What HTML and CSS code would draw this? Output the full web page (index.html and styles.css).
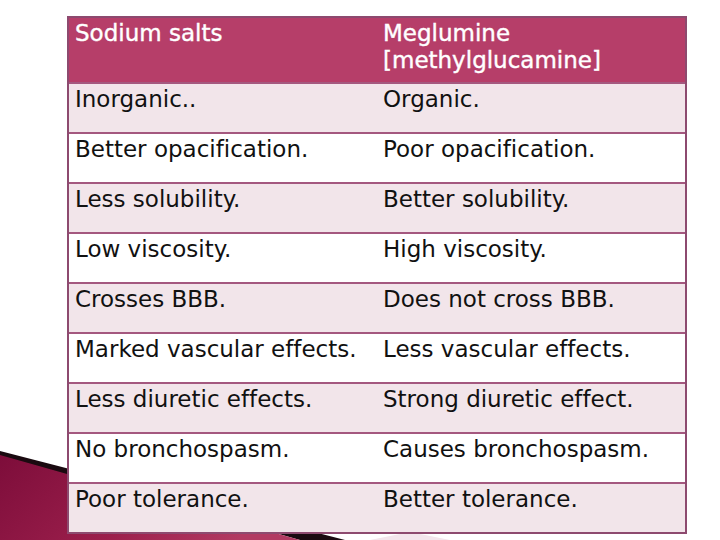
FILE: index.html
```html
<!DOCTYPE html>
<html lang="en">
<head>
<meta charset="utf-8">
<title>Sodium salts vs Meglumine</title>
<link rel="stylesheet" href="styles.css">
</head>
<body>
<div class="slide">
  <svg class="swoosh" width="720" height="120" viewBox="0 420 720 120" aria-hidden="true">
    <defs>
      <linearGradient id="cr" x1="0" y1="0" x2="1" y2="0.3">
        <stop offset="0" stop-color="#7d0d3a"/>
        <stop offset="0.6" stop-color="#9c1f4c"/>
        <stop offset="1" stop-color="#b23a62"/>
      </linearGradient>
    </defs>
    <polygon points="0,451 345,540 300,540 0,456" fill="#1a0a10"/>
    <polygon points="0,455 300,540 0,540" fill="url(#cr)"/>
    <polygon points="370,540 410,532 450,540" fill="#f3e6ec"/>
  </svg>
  <div class="grid">
    <div class="row head">
      <div class="cell">Sodium salts</div>
      <div class="cell">Meglumine<br>[methylglucamine]</div>
    </div>
    <div class="row pink">
      <div class="cell">Inorganic..</div>
      <div class="cell">Organic.</div>
    </div>
    <div class="row">
      <div class="cell">Better opacification.</div>
      <div class="cell">Poor opacification.</div>
    </div>
    <div class="row pink">
      <div class="cell">Less solubility.</div>
      <div class="cell">Better solubility.</div>
    </div>
    <div class="row">
      <div class="cell">Low viscosity.</div>
      <div class="cell">High viscosity.</div>
    </div>
    <div class="row pink">
      <div class="cell">Crosses BBB.</div>
      <div class="cell">Does not cross BBB.</div>
    </div>
    <div class="row">
      <div class="cell">Marked vascular effects.</div>
      <div class="cell">Less vascular effects.</div>
    </div>
    <div class="row pink">
      <div class="cell">Less diuretic effects.</div>
      <div class="cell">Strong diuretic effect.</div>
    </div>
    <div class="row">
      <div class="cell">No bronchospasm.</div>
      <div class="cell">Causes bronchospasm.</div>
    </div>
    <div class="row pink">
      <div class="cell">Poor tolerance.</div>
      <div class="cell">Better tolerance.</div>
    </div>
  </div>
</div>
</body>
</html>
```

FILE: styles.css
```css
html, body {
  margin: 0;
  padding: 0;
  background: #ffffff;
}

.slide {
  position: relative;
  width: 720px;
  height: 540px;
  overflow: hidden;
  padding-top: 16px;
  box-sizing: border-box;
  font-family: "DejaVu Sans", Verdana, sans-serif;
  font-variant-ligatures: none;
}

.swoosh {
  position: absolute;
  left: 0;
  bottom: 0;
  z-index: 0;
}

.grid {
  position: relative;
  z-index: 1;
  width: 620px;
  margin-left: 67px;
  border: 2px solid #8d4a6f;
  box-sizing: border-box;
  background: #ffffff;
}

.row {
  display: grid;
  grid-template-columns: 1fr 1fr;
  height: 50px;
  box-sizing: border-box;
  border-top: 2px solid #a4587f;
  background: #ffffff;
}

.row.pink {
  background: #f2e5ea;
}

.row.head {
  height: 64px;
  border-top: none;
  background: #b63e69;
  color: #ffffff;
}

.cell {
  padding: 2px 6px 0;
  font-size: 23px;
  line-height: 27px;
  color: #111111;
}

.head .cell {
  color: #ffffff;
  padding-top: 2px;
  -webkit-text-stroke: 0.4px #ffffff;
}
```
